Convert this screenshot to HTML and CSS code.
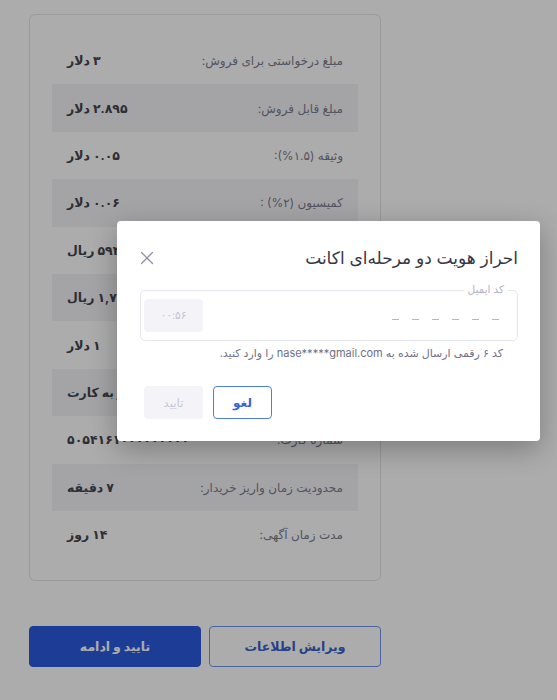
FILE: index.html
```html
<!DOCTYPE html>
<html lang="fa" dir="rtl">
<head>
<meta charset="utf-8">
<title>تایید اطلاعات آگهی</title>
<link rel="stylesheet" href="styles.css">
</head>
<body>
<div class="page">
  <div class="column">
    <div class="card">
      <div class="row"><span class="label">مبلغ درخواستی برای فروش:</span><span class="value">۳ دلار</span></div>
      <div class="row shaded"><span class="label">مبلغ قابل فروش:</span><span class="value">۲.۸۹۵ دلار</span></div>
      <div class="row"><span class="label">وثیقه (۱.۵%):</span><span class="value">۰.۰۵ دلار</span></div>
      <div class="row shaded"><span class="label">کمیسیون (۲%) :</span><span class="value">۰.۰۶ دلار</span></div>
      <div class="row"><span class="label">نرخ هر دلار:</span><span class="value">۵۹۴,۰۰۰ ریال</span></div>
      <div class="row shaded"><span class="label">مبلغ کل دریافتی:</span><span class="value">۱,۷۸۲,۰۰۰ ریال</span></div>
      <div class="row"><span class="label">حداقل مبلغ خرید:</span><span class="value">۱ دلار</span></div>
      <div class="row shaded"><span class="label">روش دریافت وجه:</span><span class="value">واریز به کارت</span></div>
      <div class="row"><span class="label">شماره کارت:</span><span class="value">۵۰۵۴۱۶۱۰۰۰۰۰۰۰۰۰</span></div>
      <div class="row shaded"><span class="label">محدودیت زمان واریز خریدار:</span><span class="value">۷ دقیقه</span></div>
      <div class="row"><span class="label">مدت زمان آگهی:</span><span class="value">۱۴ روز</span></div>
    </div>
    <div class="actions">
      <button class="btn btn-outline">ویرایش اطلاعات</button>
      <button class="btn btn-primary">تایید و ادامه</button>
    </div>
  </div>
</div>

<div class="overlay"></div>
<div class="modal">
  <div class="modal-head">
    <h2 class="modal-title">احراز هویت دو مرحله‌ای اکانت</h2>
    <button class="close" aria-label="بستن">
      <svg width="14" height="14" viewBox="0 0 14 14"><path d="M1.5 1.5 L12.5 12.5 M12.5 1.5 L1.5 12.5" stroke="#8d90a8" stroke-width="1.3" fill="none" stroke-linecap="round"/></svg>
    </button>
  </div>
  <div class="code-field">
    <span class="legend">کد ایمیل</span>
    <div class="dashes"><i></i><i></i><i></i><i></i><i></i><i></i></div>
    <span class="timer">۰۰:۵۶</span>
  </div>
  <p class="hint">کد ۶ رقمی ارسال شده به <span class="email">nase*****gmail.com</span> را وارد کنید.</p>
  <div class="modal-actions">
    <button class="mbtn mbtn-cancel">لغو</button>
    <button class="mbtn mbtn-ok">تایید</button>
  </div>
</div>
</body>
</html>
```

FILE: styles.css
```css
* { box-sizing: border-box; }

html, body {
  margin: 0;
  padding: 0;
  background: #ffffff;
  font-family: Inter, "DejaVu Sans", sans-serif;
}

body {
  width: 557px;
  height: 700px;
  overflow: hidden;
  position: relative;
}

.page {
  display: flex;
  direction: ltr;
  padding: 14px 0 0 29px;
}

.column {
  direction: rtl;
  width: 352px;
  display: flex;
  flex-direction: column;
}

.card {
  border: 1px solid #e3e3ea;
  border-radius: 6px;
  padding: 22px 22px 22px;
}

.row {
  height: 47.4px;
  display: flex;
  align-items: center;
  justify-content: space-between;
  padding: 0 15px;
}

.row.shaded { background: #f4f4f7; }

.label {
  font-size: 12px;
  color: #7b7c90;
}

.value {
  font-size: 12.5px;
  font-weight: 700;
  color: #45454f;
}

.actions {
  display: flex;
  gap: 8px;
  margin-top: 45px;
}

.btn {
  flex: 1;
  height: 41px;
  border-radius: 4px;
  font-family: inherit;
  font-size: 12.5px;
  font-weight: 700;
  cursor: pointer;
}

.btn-outline {
  background: #ffffff;
  border: 1.5px solid #6f93ec;
  color: #3d5fc9;
}

.btn-primary {
  background: #2a5add;
  border: 1px solid #2a5add;
  color: #ffffff;
}

.overlay {
  position: absolute;
  inset: 0;
  background: rgba(0, 0, 0, 0.325);
}

.modal {
  position: absolute;
  left: 117px;
  top: 221px;
  width: 423px;
  height: 220px;
  background: #ffffff;
  border-radius: 4px;
  box-shadow: 0 8px 28px rgba(0, 0, 0, 0.28);
  padding: 22px 22px 22px 23px;
  display: flex;
  flex-direction: column;
}

.modal-head {
  display: flex;
  align-items: center;
  justify-content: space-between;
  height: 30px;
}

.modal-title {
  margin: 0;
  font-size: 17px;
  font-weight: 400;
  color: #363746;
}

.close {
  border: 0;
  background: none;
  padding: 0;
  width: 14px;
  height: 14px;
  display: flex;
}

.code-field {
  position: relative;
  margin-top: 17px;
  height: 51px;
  border: 1px solid #e4e5ee;
  border-radius: 5px;
  display: flex;
  align-items: center;
  justify-content: space-between;
  padding: 0 18px 0 3px;
}

.legend {
  position: absolute;
  top: -8px;
  right: 9px;
  padding: 0 4px;
  background: #ffffff;
  font-size: 10.5px;
  color: #b0b2c4;
  line-height: 14px;
}

.dashes {
  display: flex;
  gap: 13px;
  margin-top: 7px;
}

.dashes i {
  display: block;
  width: 7px;
  height: 1px;
  background: #b6b8ca;
}

.timer {
  width: 59px;
  height: 33px;
  border-radius: 4px;
  background: #f4f4f8;
  color: #c0c2d2;
  font-size: 10.5px;
  display: flex;
  align-items: center;
  justify-content: center;
}

.hint {
  margin: 5px 15px 0 0;
  font-size: 11px;
  line-height: 14px;
  color: #6d7086;
}

.modal-actions {
  display: flex;
  justify-content: flex-end;
  gap: 10px;
  margin-top: 26px;
  padding-left: 4px;
}

.mbtn {
  width: 59px;
  height: 33px;
  border-radius: 4px;
  font-family: inherit;
  font-size: 12px;
}

.mbtn-cancel {
  background: #ffffff;
  border: 1.5px solid #4f7ce8;
  color: #3a63d6;
  font-weight: 700;
}

.mbtn-ok {
  background: #f4f4f8;
  border: 0;
  color: #c7c9d6;
}
```
